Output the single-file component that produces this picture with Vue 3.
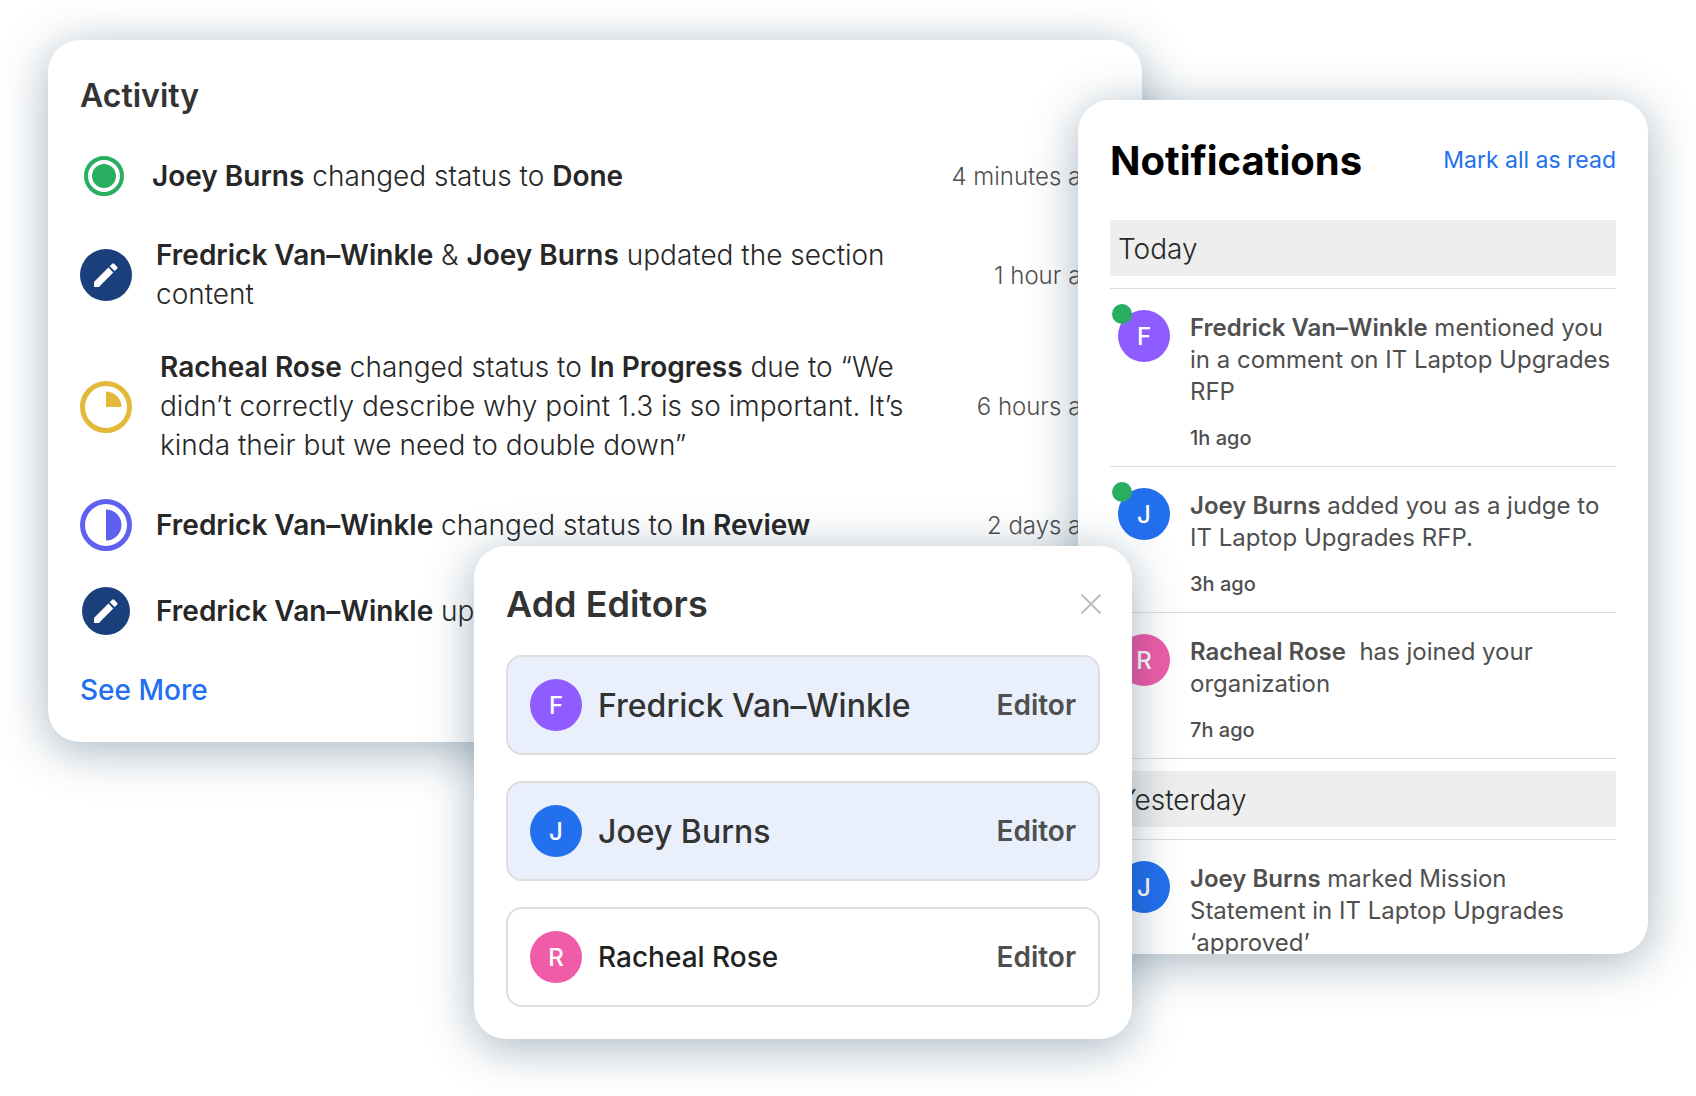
<template>
  <main class="stage">
    <section class="card activity">
      <h2>Activity</h2>
      <ul class="activity-list">
        <li v-for="item in activity" :key="item.id" class="activity-row" :class="item.status">
          <svg v-if="item.status === 'done'" class="status-icon" viewBox="0 0 48 48" aria-hidden="true">
            <circle cx="24" cy="24" r="18" fill="none" stroke="#27ae60" stroke-width="4" />
            <circle cx="24" cy="24" r="12" fill="#27ae60" />
          </svg>
          <svg v-else-if="item.status === 'progress'" class="status-icon" viewBox="0 0 52 52" aria-hidden="true">
            <circle cx="26" cy="26" r="23.5" fill="none" stroke="#e2b93b" stroke-width="5" />
            <path d="M26 10.5a15.5 15.5 0 0 1 15.5 15.5H26z" fill="#e2b93b" />
          </svg>
          <svg v-else-if="item.status === 'review'" class="status-icon" viewBox="0 0 52 52" aria-hidden="true">
            <circle cx="26" cy="26" r="23.5" fill="none" stroke="#5f60f0" stroke-width="5" />
            <path d="M26 10.5a15.5 15.5 0 0 1 0 31z" fill="#5f60f0" />
          </svg>
          <svg v-else class="status-icon" viewBox="0 0 52 52" aria-hidden="true">
            <circle cx="26" cy="26" :r="item.small ? 24 : 26" fill="#1a3f7a" />
            <path d="M14 33.1V38h4.9L33.3 23.5l-4.9-4.9zM37.1 19.7a1.3 1.3 0 0 0 0-1.9l-3-3a1.3 1.3 0 0 0-1.9 0l-2.5 2.4 4.9 4.9z" fill="#fff" />
          </svg>
          <p class="activity-text">
            <template v-for="(part, i) in item.parts" :key="i">
              <strong v-if="part.bold">{{ part.text }}</strong>
              <template v-else>{{ part.text }}</template>
            </template>
          </p>
          <time class="activity-time">{{ item.time }}</time>
        </li>
      </ul>
      <a href="#" class="see-more">See More</a>
    </section>

    <section class="card notifications">
      <header class="notifications-head">
        <h1>Notifications</h1>
        <button type="button" class="mark-read">Mark all as read</button>
      </header>
      <template v-for="group in notifications" :key="group.day">
        <h3 class="day">{{ group.day }}</h3>
        <ul class="notification-list">
          <li v-for="n in group.items" :key="n.id" class="notification">
            <span class="avatar" :class="n.color">
              {{ n.name[0] }}
              <span v-if="n.unread" class="unread"></span>
            </span>
            <div class="notification-body">
              <p><strong>{{ n.name }}</strong>{{ n.text }}</p>
              <time>{{ n.time }}</time>
            </div>
          </li>
        </ul>
      </template>
    </section>

    <section class="card editors" role="dialog" aria-labelledby="editors-title">
      <header class="editors-head">
        <h2 id="editors-title">Add Editors</h2>
        <button type="button" class="close" aria-label="Close">
          <svg viewBox="0 0 24 24" aria-hidden="true">
            <path d="M3 3l18 18M21 3L3 21" />
          </svg>
        </button>
      </header>
      <button
        v-for="editor in editors"
        :key="editor.name"
        type="button"
        class="editor"
        :class="{ selected: editor.selected }"
        @click="editor.selected = !editor.selected">
        <span class="avatar" :class="editor.color">{{ editor.name[0] }}</span>
        <span class="editor-name">{{ editor.name }}</span>
        <span class="editor-role">Editor</span>
      </button>
    </section>
  </main>
</template>

<script setup>
import { reactive } from 'vue'

const b = (text) => ({ text, bold: true })
const t = (text) => ({ text })

const activity = [
  { id: 1, status: 'done', parts: [b('Joey Burns'), t(' changed status to '), b('Done')], time: '4 minutes ago' },
  { id: 2, status: 'edit', parts: [b('Fredrick Van–Winkle'), t(' & '), b('Joey Burns'), t(' updated the section content')], time: '1 hour ago' },
  {
    id: 3,
    status: 'progress',
    parts: [
      b('Racheal Rose'),
      t(' changed status to '),
      b('In Progress'),
      t(' due to “We didn’t correctly describe why point 1.3 is so important. It’s kinda their but we need to double down”'),
    ],
    time: '6 hours ago',
  },
  { id: 4, status: 'review', parts: [b('Fredrick Van–Winkle'), t(' changed status to '), b('In Review')], time: '2 days ago' },
  { id: 5, status: 'edit', small: true, parts: [b('Fredrick Van–Winkle'), t(' updated the section')], time: '3 days ago' },
]

const notifications = [
  {
    day: 'Today',
    items: [
      { id: 1, name: 'Fredrick Van–Winkle', color: 'purple', unread: true, text: ' mentioned you in a comment on IT Laptop Upgrades RFP', time: '1h ago' },
      { id: 2, name: 'Joey Burns', color: 'blue', unread: true, text: ' added you as a judge to IT Laptop Upgrades RFP.', time: '3h ago' },
      { id: 3, name: 'Racheal Rose', color: 'pink', text: '\u00a0 has joined your organization', time: '7h ago' },
    ],
  },
  {
    day: 'Yesterday',
    items: [
      { id: 4, name: 'Joey Burns', color: 'blue', text: ' marked Mission Statement in IT Laptop Upgrades ‘approved’', time: '1d ago' },
    ],
  },
]

const editors = reactive([
  { name: 'Fredrick Van–Winkle', color: 'purple', selected: true },
  { name: 'Joey Burns', color: 'blue', selected: true },
  { name: 'Racheal Rose', color: 'pink', selected: false },
])
</script>

<style>
body {
  margin: 0;
  background: #fff;
}
</style>

<style scoped>
/* three cards overlapping on shared columns */
.stage {
  display: grid;
  grid-template-columns: 426fr 604fr 54fr 10fr 506fr;
  align-items: start;
  padding: 40px 48px 56px;
  font-family: Inter, "Liberation Sans", sans-serif;
  color: #272727;
}

.card {
  isolation: isolate;
  grid-row: 1;
  box-sizing: border-box;
  min-width: 0;
  padding: 32px;
  border-radius: 32px;
  background: #fff;
  box-shadow: 0 8px 48px rgba(20, 60, 90, 0.38);
}

h1,
h2,
h3,
p,
ul {
  margin: 0;
  padding: 0;
}

ul {
  list-style: none;
}

button {
  padding: 0;
  border: 0;
  background: none;
  font-family: inherit;
  color: inherit;
  cursor: pointer;
}

strong {
  font-weight: 600;
}

h2 {
  font-weight: 600;
  color: #333;
}

/* Activity */
.activity {
  grid-column: 1 / 5;
}

.activity h2 {
  font-size: 32px;
  line-height: 48px;
}

.activity-list {
  display: flex;
  flex-direction: column;
  gap: 34px;
  margin: 30px 0 34px;
}

.activity-row {
  display: flex;
  align-items: center;
  gap: 24px;
  min-height: 52px;
}

.activity-row.progress {
  gap: 28px;
}

.status-icon {
  flex: none;
  width: 52px;
}

.done .status-icon {
  width: 48px;
}

.activity-text {
  flex: 0 1 764px;
  font-size: 28px;
  font-weight: 300;
  line-height: 39px;
}

.activity-time {
  flex: 1 0 auto;
  text-align: right;
  font-size: 24px;
  font-weight: 300;
  color: #4f4f4f;
}

.see-more {
  display: block;
  font-size: 28px;
  font-weight: 500;
  line-height: 39px;
  color: #2370ee;
  text-decoration: none;
}

/* Notifications */
.notifications {
  grid-column: 3 / 6;
  max-height: 854px;
  margin-top: 60px;
  overflow: hidden;
}

.notifications-head {
  display: flex;
  align-items: center;
  justify-content: space-between;
  height: 56px;
  margin-bottom: 32px;
}

.notifications-head h1 {
  font-size: 40px;
  font-weight: 700;
  color: #000;
}

.mark-read {
  font-size: 23px;
  font-weight: 400;
  color: #2370ee;
}

.day {
  margin: 12px 0;
  padding: 9px 8px 7px;
  background: #eee;
  font-size: 28px;
  font-weight: 300;
  line-height: 40px;
}

.notification {
  display: flex;
  gap: 20px;
  padding: 21px 0 16px 8px;
  border-top: 1px solid #ddd;
}

.notification:last-child {
  border-bottom: 1px solid #ddd;
}

.notification-body {
  padding-top: 2px;
  font-size: 24px;
  line-height: 32px;
  color: #4f4f4f;
}

.notification-body time {
  display: block;
  margin-top: 18px;
  font-size: 20px;
  font-weight: 500;
  line-height: 24px;
}

.avatar {
  position: relative;
  display: flex;
  flex: none;
  align-items: center;
  justify-content: center;
  width: 52px;
  height: 52px;
  border-radius: 50%;
  font-size: 24px;
  font-weight: 500;
  color: #fff;
}

.purple {
  background: #8f5cff;
}

.blue {
  background: #2370ee;
}

.pink {
  background: #f05ca8;
}

.unread {
  position: absolute;
  top: -6px;
  left: -6px;
  width: 20px;
  height: 20px;
  border-radius: 50%;
  background: #27ae60;
}

/* Add Editors */
.editors {
  grid-column: 2 / 4;
  display: flex;
  flex-direction: column;
  gap: 26px;
  margin-top: 506px;
}

.editors-head {
  display: flex;
  align-items: center;
  justify-content: space-between;
  height: 51px;
}

.editors-head h2 {
  font-size: 36px;
}

.close {
  width: 24px;
  height: 24px;
  margin-right: -3px;
}

.close svg {
  display: block;
  fill: none;
  stroke: #bdbdbd;
  stroke-width: 2;
  stroke-linecap: round;
}

.editor {
  display: flex;
  align-items: center;
  gap: 16px;
  padding: 22px;
  border: 2px solid #ddd;
  border-radius: 16px;
  background: #fff;
  color: #222;
}

.editor.selected {
  background: #e9f0fc;
  color: #333;
}

.editor-name {
  font-size: 28px;
  font-weight: 500;
}

.selected .editor-name {
  font-size: 32px;
}

.editor-role {
  margin-left: auto;
  font-size: 28px;
  font-weight: 600;
  color: #4f4f4f;
}
</style>
